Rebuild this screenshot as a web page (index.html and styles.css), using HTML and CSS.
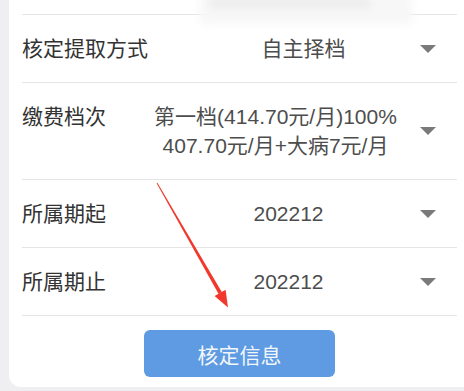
FILE: index.html
```html
<!DOCTYPE html>
<html lang="zh-CN">
<head>
<meta charset="utf-8">
<title>核定信息</title>
<link rel="stylesheet" href="styles.css">
</head>
<body>
<div class="card">
  <div class="row row--top"></div>
  <div class="row">
    <div class="label">核定提取方式</div>
    <div class="value value--mid">自主择档</div>
    <span class="caret"></span>
  </div>
  <div class="row">
    <div class="label label--top">缴费档次</div>
    <div class="value value--wide">第一档(414.70元/月)100%<br>407.70元/月+大病7元/月</div>
    <span class="caret"></span>
  </div>
  <div class="row">
    <div class="label">所属期起</div>
    <div class="value">202212</div>
    <span class="caret"></span>
  </div>
  <div class="row">
    <div class="label">所属期止</div>
    <div class="value">202212</div>
    <span class="caret"></span>
  </div>
  <div class="actions">
    <button class="btn" type="button">核定信息</button>
  </div>
</div>
<div class="mask"><div class="mask-core"></div></div>
<svg class="annot" width="464" height="391" viewBox="0 0 464 391">
  <polygon points="157.4,182.8 156.6,183.2 218.6,293.9 221.8,292.1" fill="#f0392c"/>
  <polygon points="228,307.5 225.6,289.8 214.6,296" fill="#f0392c"/>
</svg>
</body>
</html>
```
FILE: styles.css
```css
html, body {
  margin: 0;
  padding: 0;
}
body {
  position: relative;
  width: 464px;
  height: 391px;
  overflow: hidden;
  background: #efeff1;
  font-family: "Liberation Sans", "Noto Sans CJK SC", sans-serif;
}
.card {
  margin-left: 9px;
  background: #fff;
  padding: 0 7px 10px 13px;
  border-bottom-left-radius: 12px;
}
.row {
  display: flex;
  align-items: center;
  padding: 19px 0;
  border-bottom: 1px solid #e5e5e5;
}
.row--top {
  padding: 0;
  height: 15px;
  box-sizing: border-box;
}
.label {
  flex: none;
  font-size: 21px;
  line-height: 29px;
  color: #333;
}
.label--top {
  align-self: flex-start;
}
.value {
  flex: 1;
  text-align: center;
  font-size: 21px;
  line-height: 29px;
  color: #4d4d4d;
  padding-left: 51px;
}
.value--mid {
  padding-left: 39px;
}
.value--wide {
  padding-left: 25px;
}
.caret {
  flex: none;
  width: 0;
  height: 0;
  border-left: 8px solid transparent;
  border-right: 8px solid transparent;
  border-top: 8px solid #7a7a7a;
  margin-right: 21px;
}
.actions {
  display: flex;
  justify-content: center;
  padding-top: 14px;
}
.btn {
  width: 191px;
  height: 47px;
  border: none;
  border-radius: 6px;
  background: #5e9be2;
  color: #f2f6fb;
  font-family: "Liberation Sans", "Noto Sans CJK SC", sans-serif;
  font-size: 21px;
  padding: 0;
}
.mask {
  position: absolute;
  left: 200px;
  top: -8px;
  width: 212px;
  height: 32px;
  background: #f7f7f7;
  filter: blur(4px);
}
.mask-core {
  margin: 8px 0 0 10px;
  width: 160px;
  height: 7px;
  background: #e8e8e8;
}
.annot {
  position: absolute;
  left: 0;
  top: 0;
  pointer-events: none;
}
```
